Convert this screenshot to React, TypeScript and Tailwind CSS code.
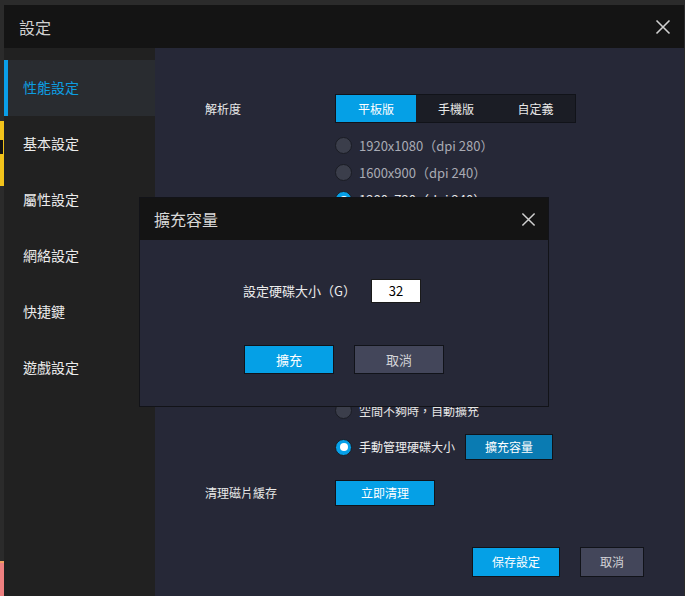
import React from "react";

const font = { fontFamily: '"Noto Sans CJK TC", "Noto Sans", sans-serif' };

const CloseIcon = ({ size = 16 }: { size?: number }) => (
  <svg width={size} height={size} viewBox="0 0 16 16" fill="none">
    <path d="M1.5 1.5 L14.5 14.5 M14.5 1.5 L1.5 14.5" stroke="#d0d0d0" strokeWidth="1.6" />
  </svg>
);

const Radio = ({ checked }: { checked?: boolean }) =>
  checked ? (
    <span className="w-[17px] h-[17px] rounded-full bg-[#06a0e8] border border-[#1a1c24] flex items-center justify-center flex-shrink-0">
      <span className="w-[8px] h-[8px] rounded-full bg-white" />
    </span>
  ) : (
    <span className="w-[17px] h-[17px] rounded-full bg-[#3b3e4b] border border-[#1a1c24] flex-shrink-0" />
  );

const RadioRow = ({ label, checked }: { label: string; checked?: boolean }) => (
  <div className="h-[27px] flex items-center gap-[7px]">
    <Radio checked={checked} />
    <span className={`text-[13px] ${checked ? "text-[#e6e6e6]" : "text-[#a9abb4]"}`}>{label}</span>
  </div>
);

const menu = ["性能設定", "基本設定", "屬性設定", "網絡設定", "快捷鍵", "遊戲設定"];

export default function App() {
  return (
    <div className="relative w-[685px] h-[596px] overflow-hidden bg-[#2b2b2b] pt-[5px] pl-[4px]" style={font}>
      {/* desktop behind the window */}
      <div className="absolute left-0 top-[121px] w-[4px] h-[65px] bg-[#f2c31b]" />
      <div className="absolute left-0 top-[140px] w-[3px] h-[14px] bg-[#111]" />
      <div className="absolute left-0 top-[561px] w-[4px] h-[2px] bg-[#f0a060]" />
      <div className="absolute left-0 top-[563px] w-[4px] h-[33px] bg-[#ef8080]" />

      <div className="w-[680px] h-[600px] flex flex-col">
        <div className="h-[43px] bg-[#141414] flex items-center justify-between pl-[15px] pr-[13px] flex-shrink-0">
          <span className="text-[16px] text-[#d2d2d2]">設定</span>
          <CloseIcon />
        </div>

        <div className="flex flex-1">
          <div className="w-[151px] bg-[#212121] pt-[12px] flex-shrink-0">
            {menu.map((m, i) =>
              i === 0 ? (
                <div key={m} className="h-[56px] flex items-center pb-[2px] pl-[15px] border-l-4 border-[#0a9ee8] bg-[#292c30] text-[14px] text-[#0d9de0]">
                  {m}
                </div>
              ) : (
                <div key={m} className="h-[56px] flex items-center pb-[2px] pl-[19px] text-[14px] text-[#ececec]">
                  {m}
                </div>
              )
            )}
          </div>

          <div className="flex-1 bg-[#262837] pl-[50px] pt-[46px] flex flex-col">
            <div className="flex items-center">
              <span className="w-[130px] text-[12px] text-[#e8e8e8]">解析度</span>
              <div className="flex border border-[#111319] h-[29px]">
                <span className="w-[80px] flex items-center justify-center bg-[#05a0e6] text-[12px] text-white">平板版</span>
                <span className="w-[80px] flex items-center justify-center bg-[#1b1d25] text-[12px] text-[#e8e8e8]">手機版</span>
                <span className="w-[79px] flex items-center justify-center bg-[#1b1d25] text-[12px] text-[#e8e8e8]">自定義</span>
              </div>
            </div>

            <div className="ml-[130px] mt-[9px] flex flex-col">
              <RadioRow label="1920x1080（dpi 280）" />
              <RadioRow label="1600x900（dpi 240）" />
              <RadioRow label="1280x720（dpi 240）" checked />
            </div>

            <div className="h-[184px]" />

            <div className="ml-[130px] flex flex-col">
              <div className="h-[27px] flex items-center gap-[7px]">
                <Radio />
                <span className="text-[12px] text-[#e6e6e6]">空間不夠時，自動擴充</span>
              </div>
              <div className="mt-[10px] h-[26px] flex items-center">
                <Radio checked />
                <span className="ml-[7px] text-[12px] text-[#ededed]">手動管理硬碟大小</span>
                <span className="ml-[10px] w-[88px] h-[26px] flex items-center justify-center bg-[#0a7bb2] border border-[#111319] text-[12px] text-white">
                  擴充容量
                </span>
              </div>
            </div>

            <div className="mt-[20px] flex items-center">
              <span className="w-[130px] text-[12px] text-[#e8e8e8]">清理磁片緩存</span>
              <span className="w-[100px] h-[26px] flex items-center justify-center bg-[#05a0e6] border border-[#111319] text-[12px] text-white">
                立即清理
              </span>
            </div>

            <div className="mt-[41px] flex justify-end gap-[20px] pr-[40px]">
              <span className="w-[88px] h-[30px] flex items-center justify-center bg-[#05a0e6] border border-[#111319] text-[12px] text-white">
                保存設定
              </span>
              <span className="w-[64px] h-[30px] flex items-center justify-center bg-[#43465a] border border-[#111319] text-[12px] text-[#d4d4d8]">
                取消
              </span>
            </div>
          </div>
        </div>
      </div>

      {/* modal dialog */}
      <div className="absolute left-[139px] top-[197px] w-[410px] h-[210px] bg-[#262837] border border-[#121318] flex flex-col">
        <div className="h-[42px] bg-[#141414] flex items-center justify-between pl-[14px] pr-[12px]">
          <span className="text-[16px] text-[#d8d8d8]">擴充容量</span>
          <CloseIcon size={15} />
        </div>
        <div className="flex items-center mt-[39px] pl-[103px]">
          <span className="w-[128px] text-[13px] text-[#ececec]">設定硬碟大小（G）</span>
          <span className="w-[50px] h-[24px] bg-white border border-[#1a1a1a] flex items-center justify-center text-[13px] text-black">
            32
          </span>
        </div>
        <div className="flex justify-center gap-[20px] mt-[42px]">
          <span className="w-[90px] h-[29px] flex items-center justify-center bg-[#05a0e6] border border-[#111319] text-[13px] text-white">
            擴充
          </span>
          <span className="w-[90px] h-[29px] flex items-center justify-center bg-[#43465a] border border-[#111319] text-[13px] text-[#d4d4d8]">
            取消
          </span>
        </div>
      </div>
    </div>
  );
}
